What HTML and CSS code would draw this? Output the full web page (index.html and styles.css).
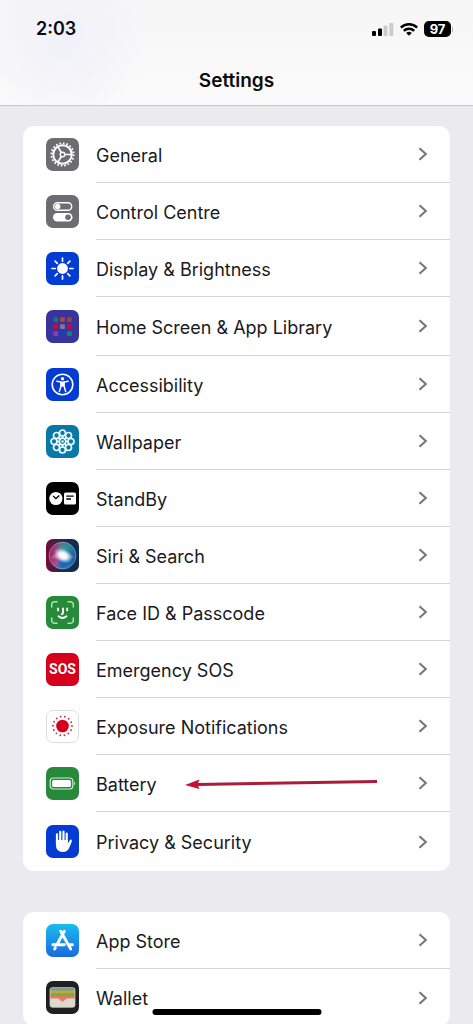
FILE: index.html
```html
<!DOCTYPE html>
<html lang="en">
<head>
<meta charset="utf-8">
<meta name="viewport" content="width=device-width, initial-scale=1">
<title>Settings</title>
<link rel="stylesheet" href="styles.css">
</head>
<body>
<svg class="defs" aria-hidden="true">
  <symbol id="chevron" viewBox="0 0 10 14"><path d="M1.5 1.2 7.8 7 1.5 12.8" fill="none" stroke="#77777a" stroke-width="2.1"/></symbol>
</svg>
<header class="top">
  <div class="status">
    <time class="clock">2:03</time>
    <div class="indicators">
      <svg width="22" height="14" viewBox="0 0 22 14" aria-label="Signal"><rect x="0" y="9" width="4" height="5" rx="1"/><rect x="6" y="6.500" width="4" height="7.500" rx="1"/><rect x="11.500" y="3.500" width="4" height="10.500" rx="1" fill="#cbcbcd"/><rect x="17.300" y="1" width="4" height="13" rx="1" fill="#cbcbcd"/></svg>
      <svg width="18" height="14" viewBox="0 0 18 14" aria-label="Wi-Fi"><g fill="none" stroke="#000" stroke-width="2.500"><path d="M.8 5.600a11.700 11.700 0 0 1 16.400 0"/><path d="M3.800 8.900a7.500 7.500 0 0 1 10.400 0"/></g><path d="M9 13.800 6.200 11a4 4 0 0 1 5.600 0Z"/></svg>
      <div class="charge"><span class="charge-level">97</span><span class="charge-tip"></span></div>
    </div>
  </div>
  <h1 class="title">Settings</h1>
</header>
<main class="content">
  <nav class="card" aria-label="System">
    <a class="row" href="#general">
      <svg class="icon" viewBox="0 0 33 33"><rect width="33" height="33" rx="7" fill="#6d6c71"/><g fill="none" stroke="#fff"><circle cx="16.500" cy="16.500" r="11.200" stroke-width="1.800" stroke-dasharray="1.700 1.819"/><circle cx="16.500" cy="16.500" r="9.300" stroke-width="2"/><circle cx="16.500" cy="16.500" r="2.300" stroke-width="1.400"/><path d="M18.800 16.500h7M15.300 14.500l-3.600-6M15.300 18.500l-3.600 6" stroke-width="1.600"/></g></svg>
      <span class="row-body"><span class="label">General</span><svg class="chevron"><use href="#chevron"/></svg></span>
    </a>
    <a class="row" href="#control-centre">
      <svg class="icon" viewBox="0 0 33 33"><rect width="33" height="33" rx="7" fill="#6d6c71"/><rect x="7.700" y="7.700" width="18" height="7.600" rx="3.800" fill="none" stroke="#fff" stroke-width="1.400"/><circle cx="11.700" cy="11.500" r="2.700" fill="#fff"/><rect x="7" y="18" width="19.500" height="8.500" rx="4.250" fill="#fff"/><circle cx="22" cy="22.250" r="2.800" fill="#6d6c71"/></svg>
      <span class="row-body"><span class="label">Control Centre</span><svg class="chevron"><use href="#chevron"/></svg></span>
    </a>
    <a class="row" href="#display">
      <svg class="icon" viewBox="0 0 33 33"><rect width="33" height="33" rx="7" fill="#033bd3"/><circle cx="16.500" cy="16.500" r="5.400" fill="#fff"/><path d="M16.500 6v3.200M16.500 23.800V27M6 16.500h3.200M23.800 16.500H27M9.100 9.100l2.200 2.200M21.700 21.700l2.200 2.200M9.100 23.900l2.200-2.200M21.700 11.300l2.200-2.200" stroke="#fff" stroke-width="1.700" stroke-linecap="round"/></svg>
      <span class="row-body"><span class="label">Display &amp; Brightness</span><svg class="chevron"><use href="#chevron"/></svg></span>
    </a>
    <a class="row row-tall" href="#home-screen">
      <svg class="icon" viewBox="0 0 33 33"><rect width="33" height="33" rx="7" fill="#37349d"/><rect x="7.300" y="7.300" width="4.800" height="4.800" rx="1" fill="#14786f"/><rect x="14.100" y="7.300" width="4.800" height="4.800" rx="1" fill="#b14731"/><rect x="21" y="7.300" width="4.800" height="4.800" rx="1" fill="#ac3c3a"/><rect x="7.300" y="14.200" width="4.800" height="4.800" rx="1" fill="#cc0938"/><rect x="14.100" y="14.200" width="4.800" height="4.800" rx="1" fill="#7c7994"/><rect x="21" y="14.200" width="4.800" height="4.800" rx="1" fill="#c90b40"/><rect x="7.300" y="21.200" width="4.800" height="4.800" rx="1" fill="#8740ad"/><rect x="14.100" y="21.200" width="4.800" height="4.800" rx="1" fill="#1c3fc0"/><rect x="21" y="21.200" width="4.800" height="4.800" rx="1" fill="#12817f"/></svg>
      <span class="row-body"><span class="label">Home Screen &amp; App Library</span><svg class="chevron"><use href="#chevron"/></svg></span>
    </a>
    <a class="row" href="#accessibility">
      <svg class="icon" viewBox="0 0 33 33"><rect width="33" height="33" rx="7" fill="#033bd3"/><circle cx="16.500" cy="16.500" r="10.300" fill="none" stroke="#fff" stroke-width="1.600"/><circle cx="16.500" cy="10.700" r="1.700" fill="#fff"/><path d="M10.800 13.200l4.200.8v4l-1.700 5.600M22.200 13.200l-4.200.8v4l1.700 5.600" fill="none" stroke="#fff" stroke-width="1.500" stroke-linecap="round" stroke-linejoin="round"/><path d="M14.500 13.600h4v5h-4z" fill="#fff"/></svg>
      <span class="row-body"><span class="label">Accessibility</span><svg class="chevron"><use href="#chevron"/></svg></span>
    </a>
    <a class="row" href="#wallpaper">
      <svg class="icon" viewBox="0 0 33 33"><rect width="33" height="33" rx="7" fill="#0878a8"/><g fill="none" stroke="#e9f9fc" stroke-width="1.700"><circle cx="16.500" cy="8" r="3"/><circle cx="22.500" cy="10.500" r="3"/><circle cx="25" cy="16.500" r="3"/><circle cx="22.500" cy="22.500" r="3"/><circle cx="16.500" cy="25" r="3"/><circle cx="10.500" cy="22.500" r="3"/><circle cx="8" cy="16.500" r="3"/><circle cx="10.500" cy="10.500" r="3"/><circle cx="16.500" cy="16.500" r="3.300"/><path d="M16.500 11v3M16.500 19v3M11 16.500h3M19 16.500h3M12.600 12.600l2 2M20.400 20.400l-2-2M20.400 12.600l-2 2M12.600 20.400l2-2"/></g><circle cx="16.500" cy="16.500" r="1.300" fill="#e9f9fc"/></svg>
      <span class="row-body"><span class="label">Wallpaper</span><svg class="chevron"><use href="#chevron"/></svg></span>
    </a>
    <a class="row" href="#standby">
      <svg class="icon" viewBox="0 0 33 33"><rect width="33" height="33" rx="7"/><circle cx="9.900" cy="16.500" r="6.600" fill="#fff"/><path d="M7.200 14l2.700 2.600 3.400-3" fill="none" stroke="#000" stroke-width="1.300"/><rect x="18" y="10.500" width="12" height="12" rx="1.600" fill="#fff"/><path d="M20.300 14.100h7.400M20.300 17h4.700" stroke="#000" stroke-width="1.300"/></svg>
      <span class="row-body"><span class="label">StandBy</span><svg class="chevron"><use href="#chevron"/></svg></span>
    </a>
    <a class="row" href="#siri">
      <svg class="icon" viewBox="0 0 33 33"><defs><linearGradient id="siri-edge"><stop stop-color="#7b0a36"/><stop offset=".4" stop-color="#252a46"/><stop offset="1" stop-color="#102b52"/></linearGradient><linearGradient id="siri-orb" x1="0" y1=".4" x2="1" y2=".6"><stop stop-color="#a71763"/><stop offset=".35" stop-color="#a05a8d"/><stop offset=".65" stop-color="#3089a6"/><stop offset="1" stop-color="#1556a5"/></linearGradient><radialGradient id="siri-glow"><stop stop-color="#fff"/><stop offset=".4" stop-color="#fff" stop-opacity=".9"/><stop offset="1" stop-color="#cfefff" stop-opacity="0"/></radialGradient><radialGradient id="siri-green"><stop stop-color="#27a99a"/><stop offset="1" stop-color="#147b79" stop-opacity="0"/></radialGradient><radialGradient id="siri-blue"><stop stop-color="#0864c9"/><stop offset="1" stop-color="#0864c9" stop-opacity="0"/></radialGradient></defs><rect width="33" height="33" rx="7" fill="url(#siri-edge)"/><circle cx="16.500" cy="16.500" r="13.500" fill="url(#siri-orb)"/><ellipse cx="18" cy="9" rx="10" ry="6.500" fill="url(#siri-green)"/><ellipse cx="18" cy="25" rx="9" ry="7" fill="url(#siri-blue)"/><circle cx="16.500" cy="16.500" r="13.400" fill="none" stroke="#aab5cd" stroke-opacity=".55"/><path d="M4 19c4-2 7-7 13-7 4 0 6 4 12 6-6 1-8 4-12 3s-7-2-13-2" fill="#f2a8cd" fill-opacity=".35"/><ellipse cx="17" cy="16.500" rx="10" ry="7" transform="rotate(30 17 16.500)" fill="url(#siri-glow)"/></svg>
      <span class="row-body"><span class="label">Siri &amp; Search</span><svg class="chevron"><use href="#chevron"/></svg></span>
    </a>
    <a class="row" href="#face-id">
      <svg class="icon" viewBox="0 0 33 33"><rect width="33" height="33" rx="7" fill="#278a3b"/><g fill="none" stroke="#a9e5ad" stroke-width="1.500" stroke-linecap="round"><path d="M5.700 11V8.700a3 3 0 0 1 3-3H11M22 5.700h2.300a3 3 0 0 1 3 3V11M27.300 22v2.300a3 3 0 0 1-3 3H22M11 27.300H8.700a3 3 0 0 1-3-3V22"/></g><g fill="none" stroke="#fff" stroke-width="1.800" stroke-linecap="round"><path d="M12 12.500v1.900M21.200 12.500v1.900M17 12.500v4.600q0 1-1.300 1M12.500 20.300q4 3.500 8 0"/></g></svg>
      <span class="row-body"><span class="label">Face ID &amp; Passcode</span><svg class="chevron"><use href="#chevron"/></svg></span>
    </a>
    <a class="row" href="#sos">
      <span class="icon icon-sos">SOS</span>
      <span class="row-body"><span class="label">Emergency SOS</span><svg class="chevron"><use href="#chevron"/></svg></span>
    </a>
    <a class="row" href="#exposure">
      <svg class="icon" viewBox="0 0 33 33"><rect x=".5" y=".5" width="32" height="32" rx="6.500" fill="#fff" stroke="#dedee0"/><circle cx="16.500" cy="16" r="6.300" fill="#d5001b"/><circle cx="16.500" cy="16" r="9.500" fill="none" stroke="#d5303f" stroke-width="1.900" stroke-linecap="round" stroke-dasharray="0 4.264"/></svg>
      <span class="row-body"><span class="label">Exposure Notifications</span><svg class="chevron"><use href="#chevron"/></svg></span>
    </a>
    <a class="row" href="#battery">
      <svg class="icon" viewBox="0 0 33 33"><rect width="33" height="33" rx="7" fill="#278a3b"/><rect x="4.200" y="11" width="22.600" height="11" rx="3" fill="none" stroke="#c8eecb" stroke-width="1.200"/><rect x="6.100" y="12.900" width="18.800" height="7.200" rx="1.500" fill="#fff"/><path d="M28.200 14.500q2 2 0 4z" fill="#d5f3d7"/></svg>
      <span class="row-body"><span class="label">Battery</span>
        <svg class="pointer" viewBox="0 0 193 12" aria-hidden="true"><path d="M12 7.500 192 4.500" stroke="#ab1c3b" stroke-width="3"/><path d="M0 8 14.500 2.500 12.500 7.500 14.500 12Z" fill="#c8102e"/></svg>
        <svg class="chevron"><use href="#chevron"/></svg></span>
    </a>
    <a class="row row-tall" href="#privacy">
      <svg class="icon" viewBox="0 0 33 33"><rect width="33" height="33" rx="7" fill="#033bd3"/><path d="M11 17V9.300M14.200 16V6.900M17.500 16V6.700M20.700 17V8.700" fill="none" stroke="#fff" stroke-width="2.200" stroke-linecap="round"/><path d="M9.900 15h11.900v3.700l1.800-3.200q.8-1.400 1.900-.7.700.5.300 1.600l-2.500 6.300q-1.700 4.200-6.500 4.200-6.900 0-6.900-7.200Z" fill="#fff"/></svg>
      <span class="row-body"><span class="label">Privacy &amp; Security</span><svg class="chevron"><use href="#chevron"/></svg></span>
    </a>
  </nav>
  <nav class="card" aria-label="Apps">
    <a class="row" href="#app-store">
      <svg class="icon" viewBox="0 0 33 33"><defs><linearGradient id="store" x2="0" y2="1"><stop stop-color="#19bdf0"/><stop offset="1" stop-color="#1b68df"/></linearGradient></defs><rect width="33" height="33" rx="7" fill="url(#store)"/><g fill="none" stroke="#fff" stroke-width="2.900" stroke-linecap="round"><path d="M18.300 7.300 11.800 19M14.700 7.300 24.700 25M6.800 20.700h11.500M23 20.700h3.400M9.300 23.800 8.600 25"/></g></svg>
      <span class="row-body"><span class="label">App Store</span><svg class="chevron"><use href="#chevron"/></svg></span>
    </a>
    <a class="row" href="#wallet">
      <svg class="icon" viewBox="0 0 33 33"><defs><clipPath id="wallet-clip"><rect x="4" y="6.700" width="25" height="19.600" rx="2.300"/></clipPath></defs><rect width="33" height="33" rx="7" fill="#202022"/><g clip-path="url(#wallet-clip)"><path d="M4 6h25v21H4z" fill="#ded9cd"/><path d="M4 6h25v4H4z" fill="#5b9ca8"/><path d="M4 9.300h25v4H4z" fill="#c3a63c"/><path d="M4 12.300h25v4H4z" fill="#78a94b"/><path d="M4 15.300h25v2.200h-7.500q-1.600 0-2.300 1.200-2.700 3.400-5.400 0-.7-1.200-2.300-1.200H4z" fill="#ee7664"/></g><rect x="4" y="6.700" width="25" height="19.600" rx="2.300" fill="none" stroke="#d8d4ca" stroke-width=".7"/></svg>
      <span class="row-body"><span class="label">Wallet</span><svg class="chevron"><use href="#chevron"/></svg></span>
    </a>
  </nav>
</main>
<div class="home-bar"></div>
</body>
</html>
```
FILE: styles.css
```css
* {
  box-sizing: border-box;
}

body {
  margin: 0;
  height: 100vh;
  display: flex;
  flex-direction: column;
  overflow: hidden;
  background: #ebeaef;
  color: #1a1a1c;
  font-family: Inter, "Liberation Sans", sans-serif;
}

.defs {
  display: none;
}

.top {
  flex: none;
  padding-bottom: 12px;
  border-bottom: 1px solid #c8c8cb;
  background:
    radial-gradient(ellipse 80px 90px at 64px 40px, #f0f0f8, transparent),
    linear-gradient(#f6f6f7, #fbfbfb);
  color: #0b0b0c;
}

.status {
  display: flex;
  align-items: center;
  justify-content: space-between;
  padding: 17px 20px 28px 36px;
}

.clock {
  font-size: 18px;
  line-height: 24px;
  font-weight: 600;
}

.indicators {
  display: flex;
  align-items: center;
  gap: 6px;
}

.charge {
  display: flex;
  align-items: center;
  gap: 1px;
}

.charge-level {
  width: 27px;
  border-radius: 5px;
  background: #000;
  color: #fff;
  font-size: 13px;
  line-height: 16px;
  font-weight: 700;
  text-align: center;
}

.charge-tip {
  width: 1px;
  height: 5px;
  background: #b5b5b8;
}

.title {
  margin: 0;
  font-size: 19px;
  line-height: 24px;
  font-weight: 600;
  text-align: center;
}

.content {
  flex: 1;
  min-height: 0;
  overflow: hidden;
  padding: 20px 23px 0;
}

.card {
  margin-bottom: 41px;
  border-radius: 11px;
  background: #fff;
}

.row {
  display: flex;
  gap: 17px;
  align-items: center;
  min-height: 57px;
  padding-left: 23px;
  color: inherit;
  text-decoration: none;
}

.row-tall {
  min-height: 59px;
}

.icon {
  flex: none;
  width: 33px;
  height: 33px;
}

.icon-sos {
  border-radius: 7px;
  background: #d5001b;
  color: #fff;
  font-family: "Liberation Sans Narrow", Roboto, sans-serif;
  font-size: 14px;
  line-height: 33px;
  font-weight: 700;
  text-align: center;
}

.row-body {
  flex: 1;
  align-self: stretch;
  display: flex;
  align-items: center;
  padding-right: 22px;
  border-bottom: 1px solid #d4d4d6;
}

.row:last-child .row-body {
  border-bottom: 0;
}

.label {
  padding-top: 3px;
  font-size: 18px;
  line-height: 24px;
}

.pointer {
  width: 193px;
  height: 12px;
  margin-left: 28px;
}

.chevron {
  width: 10px;
  height: 14px;
  margin-left: auto;
}

.home-bar {
  position: fixed;
  bottom: 9px;
  left: 50%;
  width: 169px;
  height: 6px;
  border-radius: 3px;
  background: #000;
  transform: translateX(-50%);
}
```
